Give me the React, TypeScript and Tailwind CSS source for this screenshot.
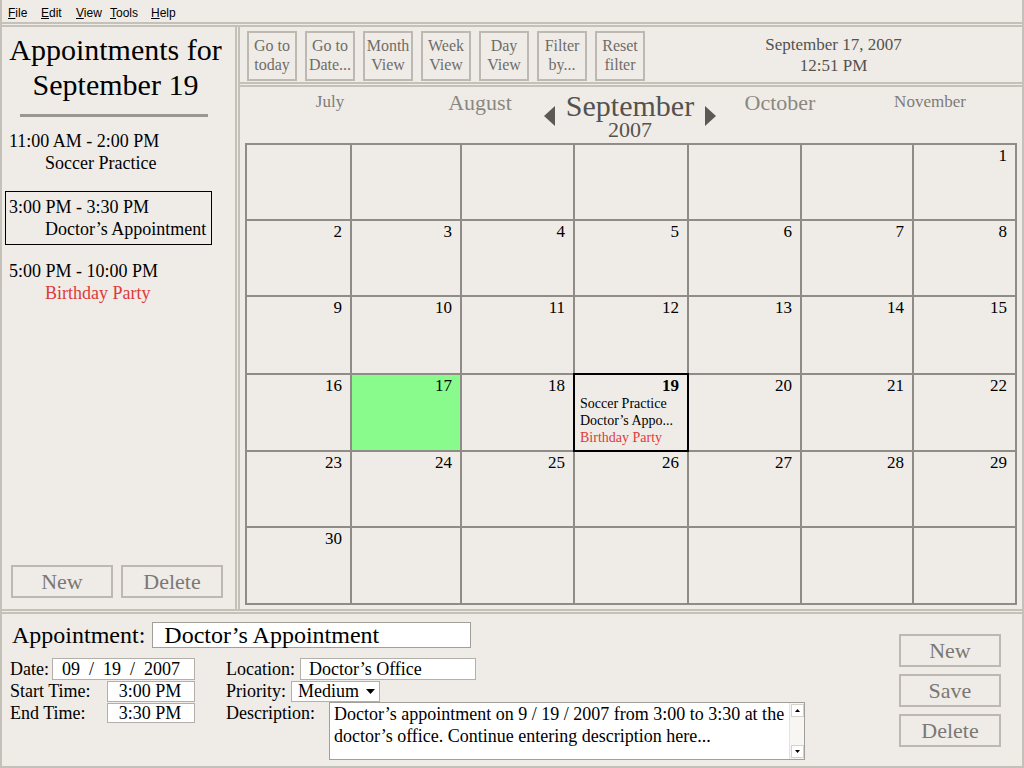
import React from "react";

const BG = "bg-[#efece8]";

function TriLeft() {
  return (
    <svg width="11" height="20" viewBox="0 0 11 20">
      <polygon points="11,0 11,20 0,10" fill="#5c5954" />
    </svg>
  );
}
function TriRight() {
  return (
    <svg width="11" height="20" viewBox="0 0 11 20">
      <polygon points="0,0 0,20 11,10" fill="#5c5954" />
    </svg>
  );
}

const toolbarButtons: [string, string][] = [
  ["Go to", "today"],
  ["Go to", "Date..."],
  ["Month", "View"],
  ["Week", "View"],
  ["Day", "View"],
  ["Filter", "by..."],
  ["Reset", "filter"],
];

const weeks: (number | null)[][] = [
  [null, null, null, null, null, null, 1],
  [2, 3, 4, 5, 6, 7, 8],
  [9, 10, 11, 12, 13, 14, 15],
  [16, 17, 18, 19, 20, 21, 22],
  [23, 24, 25, 26, 27, 28, 29],
  [30, null, null, null, null, null, null],
];

function MenuItem({ w, first, rest }: { w: string; first: string; rest: string }) {
  return (
    <div className={w}>
      <span className="underline">{first}</span>
      {rest}
    </div>
  );
}

export default function App() {
  return (
    <div
      className={`w-[1024px] h-[768px] ${BG} flex flex-col border-x-2 border-b-2 border-[#c4c1b8] font-['Liberation_Serif',serif] text-black overflow-hidden`}
    >
      {/* Menu bar */}
      <div className="h-[22px] flex items-center pt-[3px] pl-[6px] text-[12px] font-['Liberation_Sans',sans-serif] text-black">
        <MenuItem w="w-[33px]" first="F" rest="ile" />
        <MenuItem w="w-[35px]" first="E" rest="dit" />
        <MenuItem w="w-[34px]" first="V" rest="iew" />
        <MenuItem w="w-[41px]" first="T" rest="ools" />
        <MenuItem w="w-[40px]" first="H" rest="elp" />
      </div>
      <div className="h-[5px] border-y-2 border-[#c4c1b8]" />

      {/* Middle */}
      <div className="h-[582px] flex">
        {/* Left panel */}
        <div className="w-[233px] flex flex-col pb-[11px]">
          <div className="pt-[5px] text-center text-[30px] leading-[35px] pr-[6px]">
            <div>Appointments for</div>
            <div>September 19</div>
          </div>
          <div className="mt-[12px] ml-[18px] w-[188px] h-[3px] bg-[#9a9690]" />
          <div className="mt-[13px] text-[18px] leading-[22px]">
            <div className="pl-[7px]">
              <div>11:00 AM - 2:00 PM</div>
              <div className="pl-[36px]">Soccer Practice</div>
            </div>
            <div className="mt-[17px] ml-[3px] w-[207px] border border-black pl-[3px] pt-[4px] pb-[4px]">
              <div>3:00 PM - 3:30 PM</div>
              <div className="pl-[36px]">Doctor’s Appointment</div>
            </div>
            <div className="mt-[15px] pl-[7px]">
              <div>5:00 PM - 10:00 PM</div>
              <div className="pl-[36px] text-[#dd3b3b]">Birthday Party</div>
            </div>
          </div>
          <div className="mt-auto flex gap-[8px] pl-[9px]">
            <div className="w-[102px] h-[33px] border-2 border-[#bdb9b2] flex items-center justify-center text-[22px] text-[#7b7873]">
              New
            </div>
            <div className="w-[102px] h-[33px] border-2 border-[#bdb9b2] flex items-center justify-center text-[22px] text-[#7b7873]">
              Delete
            </div>
          </div>
        </div>
        <div className="w-[5px] border-x-2 border-[#c4c1b8]" />

        {/* Right panel */}
        <div className="flex-1 flex flex-col">
          {/* Toolbar */}
          <div className="h-[55px] flex pt-[4px] pl-[7px]">
            <div className="flex gap-[8px]">
              {toolbarButtons.map(([a, b]) => (
                <div
                  key={a + b}
                  className="w-[50px] h-[50px] border-2 border-[#bdb9b2] flex flex-col items-center justify-center pb-[2px] text-[16px] leading-[19px] text-[#6f6c67]"
                >
                  <div>{a}</div>
                  <div>{b}</div>
                </div>
              ))}
            </div>
            <div className="flex-1 flex flex-col items-center pt-[3px] text-[17px] leading-[21px] text-[#55524d]">
              <div>September 17, 2007</div>
              <div>12:51 PM</div>
            </div>
          </div>
          <div className="h-[5px] border-y-2 border-[#c4c1b8]" />

          {/* Calendar */}
          <div className="flex-1 flex flex-col">
            <div className="h-[56px] flex pl-[15px]">
              <div className="w-[150px] flex justify-center pt-[5px] text-[17px] leading-[20px] text-[#7e7b76]">July</div>
              <div className="w-[150px] flex justify-center pt-[3px] text-[22px] leading-[26px] text-[#8a8781]">August</div>
              <div className="w-[150px] flex justify-center items-start gap-[11px] pt-[5px]">
                <div className="mt-[14px]"><TriLeft /></div>
                <div className="flex flex-col items-center text-[#55524d]">
                  <div className="text-[30px] leading-[28px]">September</div>
                  <div className="text-[22px] leading-[20px]">2007</div>
                </div>
                <div className="mt-[14px]"><TriRight /></div>
              </div>
              <div className="w-[150px] flex justify-center pt-[3px] text-[22px] leading-[26px] text-[#8a8781]">October</div>
              <div className="w-[150px] flex justify-center pt-[5px] text-[17px] leading-[20px] text-[#7e7b76]">November</div>
            </div>
            <div className="ml-[5px] w-fit grid grid-cols-[103px_108px_111px_112px_111px_110px_101px] grid-rows-[74px_74px_76px_75px_74px_75px] gap-[2px] p-[2px] bg-[#8f8b86]">
              {weeks.flatMap((week, wi) =>
                week.map((d, di) => {
                  const isToday = d === 17;
                  const isSel = d === 19;
                  return (
                    <div
                      key={`${wi}-${di}`}
                      className={`${isToday ? "bg-[#88fb8c]" : BG} ${
                        isSel ? "relative z-10 outline-2 outline-black" : ""
                      } flex flex-col`}
                    >
                      {d !== null && (
                        <div
                          className={`text-right pr-[8px] pt-[1px] text-[17px] leading-[20px] ${
                            isSel ? "font-bold" : ""
                          }`}
                        >
                          {d}
                        </div>
                      )}
                      {isSel && (
                        <div className="pl-[5px] -mt-[1px] text-[14px] leading-[17px]">
                          <div>Soccer Practice</div>
                          <div>Doctor’s Appo...</div>
                          <div className="text-[#dd3b3b]">Birthday Party</div>
                        </div>
                      )}
                    </div>
                  );
                })
              )}
            </div>
          </div>
        </div>
      </div>

      <div className="h-[5px] border-y-2 border-[#c4c1b8]" />

      {/* Bottom panel */}
      <div className="flex-1 flex">
        <div className="flex-1 flex flex-col pl-[8px] pt-[8px]">
          <div className="flex items-center">
            <div className="text-[24px] leading-[26px] ml-[2px]">Appointment:</div>
            <div className="ml-[7px] w-[319px] h-[26px] bg-white border border-[#a29e98] pl-[11px] text-[24px] leading-[24px]">
              Doctor’s Appointment
            </div>
          </div>
          <div className="mt-[10px] flex text-[18px] leading-[20px]">
            <div className="w-[216px] flex flex-col">
              <div className="h-[22px] flex items-center">
                <div className="w-[42px]">Date:</div>
                <div className="w-[143px] h-[22px] bg-white border border-[#b3afa9] flex items-center pl-[9px] whitespace-pre">
                  {"09  /  19  /  2007"}
                </div>
              </div>
              <div className="h-[22px] flex items-center">
                <div className="w-[97px]">Start Time:</div>
                <div className="w-[88px] h-[21px] bg-white border border-[#b3afa9] flex items-center justify-center pr-[2px]">
                  3:00 PM
                </div>
              </div>
              <div className="h-[22px] flex items-center">
                <div className="w-[97px]">End Time:</div>
                <div className="w-[88px] h-[20px] bg-white border border-[#b3afa9] flex items-center justify-center pr-[2px]">
                  3:30 PM
                </div>
              </div>
            </div>
            <div className="flex flex-col">
              <div className="h-[22px] flex items-center">
                <div className="w-[74px]">Location:</div>
                <div className="w-[176px] h-[22px] bg-white border border-[#b3afa9] flex items-center pl-[8px]">
                  Doctor’s Office
                </div>
              </div>
              <div className="h-[22px] flex items-center">
                <div className="w-[65px]">Priority:</div>
                <div className="w-[89px] h-[21px] bg-white border border-[#b3afa9] flex items-center pl-[6px] gap-[7px]">
                  <span>Medium</span>
                  <svg width="9" height="5" viewBox="0 0 9 5">
                    <polygon points="0,0 9,0 4.5,5" fill="#000" />
                  </svg>
                </div>
              </div>
              <div className="flex items-start">
                <div className="w-[103px] h-[22px] flex items-center">Description:</div>
                <div className="w-[476px] h-[58px] bg-white border border-[#a29e98] flex">
                  <div className="flex-1 pl-[4px] pt-[0px] leading-[22px]">
                    Doctor’s appointment on 9 / 19 / 2007 from 3:00 to 3:30 at the doctor’s office. Continue entering description here...
                  </div>
                  <div className="w-[15px] flex flex-col justify-between bg-[#f7f6f3] border-l border-[#e4e2dd] py-[1px]">
                    <div className="h-[13px] w-[13px] mx-auto bg-white border border-[#d5d2cc] flex items-center justify-center">
                      <svg width="5" height="3" viewBox="0 0 5 3">
                        <polygon points="0,3 5,3 2.5,0" fill="#000" />
                      </svg>
                    </div>
                    <div className="h-[13px] w-[13px] mx-auto bg-white border border-[#d5d2cc] flex items-center justify-center">
                      <svg width="5" height="3" viewBox="0 0 5 3">
                        <polygon points="0,0 5,0 2.5,3" fill="#000" />
                      </svg>
                    </div>
                  </div>
                </div>
              </div>
            </div>
          </div>
        </div>
        <div className="w-[123px] pt-[20px] pr-[21px] flex flex-col gap-[7px]">
          {["New", "Save", "Delete"].map((t) => (
            <div
              key={t}
              className="w-[102px] h-[33px] border-2 border-[#bdb9b2] flex items-center justify-center text-[22px] text-[#7b7873]"
            >
              {t}
            </div>
          ))}
        </div>
      </div>
    </div>
  );
}
